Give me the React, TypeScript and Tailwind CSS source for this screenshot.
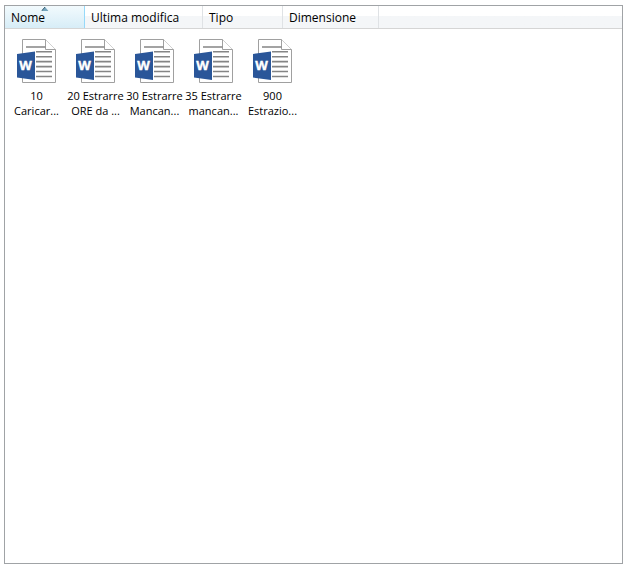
import React, { useState } from 'react';

interface Column {
  id: string;
  label: string;
  width: string;
}

interface FileItem {
  name: string;
  lines: [string, string];
}

const columns: Column[] = [
  { id: 'name', label: 'Nome', width: 'w-20' },
  { id: 'modified', label: 'Ultima modifica', width: 'w-[118px]' },
  { id: 'type', label: 'Tipo', width: 'w-20' },
  { id: 'size', label: 'Dimensione', width: 'w-24' },
];

const files: FileItem[] = [
  { name: '10 Caricare', lines: ['10', 'Caricar...'] },
  { name: '20 Estrarre ORE', lines: ['20 Estrarre', 'ORE da ...'] },
  { name: '30 Estrarre Mancanti', lines: ['30 Estrarre', 'Mancan...'] },
  { name: '35 Estrarre mancanti', lines: ['35 Estrarre', 'mancan...'] },
  { name: '900 Estrazione', lines: ['900', 'Estrazio...'] },
];

const WordIcon = () => (
  <svg width="40" height="44" viewBox="0 0 40 44" aria-hidden="true">
    <path d="M5.5 .5H28.500L38.500 10.500V43.500H5.500Z" fill="#fff" stroke="#a0a0a0" />
    <path d="M28.500 .5V10.500H38.500" fill="#fff" stroke="#a0a0a0" />
    <path
      d="M9 8H28.500M19 12.800H35M19 17.700H35M19 22.600H35M19 27.600H35M19 32.500H35M19 37.500H35"
      stroke="#858585"
      strokeWidth="1.6"
    />
    <path d="M0 15L18 12.500V41L0 38.500Z" fill="#2a5699" />
    <text
      x="8.5"
      y="31"
      textAnchor="middle"
      fill="#fff"
      stroke="#fff"
      strokeWidth=".4"
      fontSize="13"
      fontWeight="700"
      fontFamily="Open Sans, sans-serif"
    >
      W
    </text>
  </svg>
);

const App = () => {
  const [sortBy, setSortBy] = useState('name');
  const [selected, setSelected] = useState<string | null>(null);

  return (
    <div className="flex min-h-screen bg-white pt-[5px] pr-[5px] pb-[3px] pl-1 font-['Open_Sans',sans-serif] text-[12px] leading-[15px] text-black">
      <main className="min-w-0 flex-1 border border-[#a0a3a6]">
        <div className="flex h-[23px] border-b border-[#d5d5d5] bg-linear-to-b from-white from-45% to-[#f4f6f8] to-45%">
          {columns.map((column) => {
            const active = sortBy === column.id;
            return (
              <button
                key={column.id}
                onClick={() => setSortBy(column.id)}
                className={`relative shrink-0 border-r px-1.5 text-left whitespace-nowrap ${column.width} ${
                  active
                    ? 'border-[#96d9f9] bg-linear-to-b from-[#f2fafd] to-[#d7edf7]'
                    : 'border-[#dfe2e5]'
                }`}
              >
                {column.label}
                {active && (
                  <svg
                    className="absolute top-px left-1/2 -translate-x-1/2"
                    width="7"
                    height="4"
                    viewBox="0 0 7 4"
                    aria-hidden="true"
                  >
                    <path d="M3.500 0L7 4H0Z" fill="#75a5bd" />
                    <path d="M3.500 0L0 4" stroke="#3c5e72" />
                  </svg>
                )}
              </button>
            );
          })}
        </div>

        <ul className="flex flex-wrap px-0.5 pt-2.5">
          {files.map((file) => (
            <li key={file.name} className="w-[59px]">
              <button
                title={file.name}
                onClick={() => setSelected(file.name)}
                className={`flex w-full flex-col items-center gap-[5px] text-[11px] whitespace-nowrap ${
                  selected === file.name ? 'bg-[#d7edf7]' : ''
                }`}
              >
                <WordIcon />
                <span>
                  {file.lines[0]}
                  <br />
                  {file.lines[1]}
                </span>
              </button>
            </li>
          ))}
        </ul>
      </main>
    </div>
  );
};

export default App;
